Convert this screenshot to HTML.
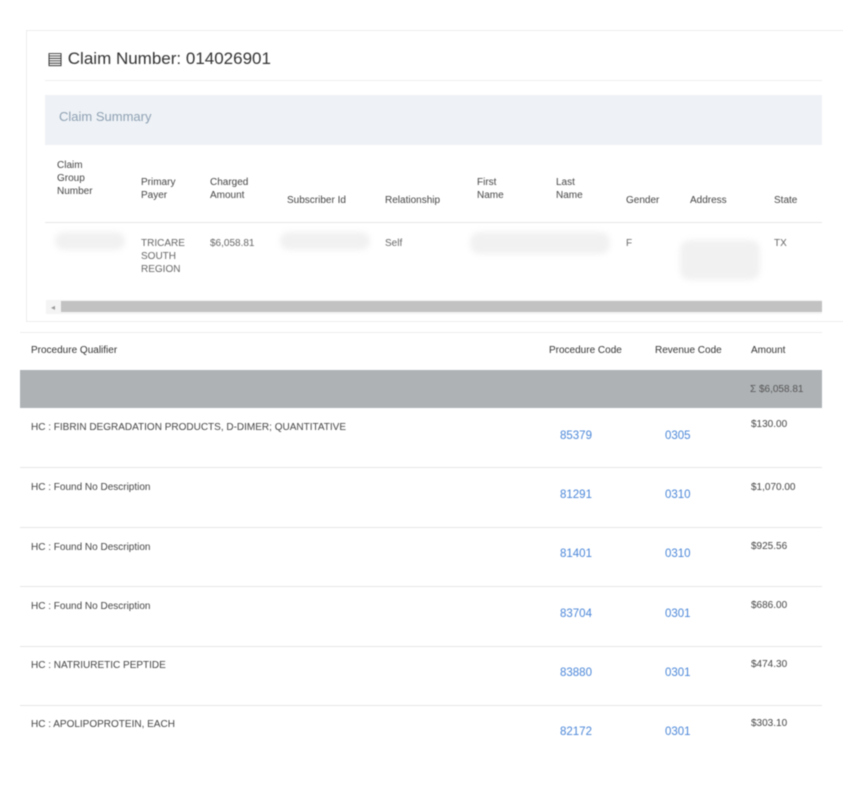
<!DOCTYPE html><html><head><style>
body{margin:0;width:843px;height:796px;background:#fff;position:relative;overflow:hidden;font-family:"Liberation Sans",sans-serif;color:#444;font-size:10px;filter:blur(0.4px)}
div{position:absolute}
.t{line-height:13px;white-space:nowrap}
.l{height:1px;background:#e6e6e6}
.b{color:#4a86d8;font-size:11.5px}
.blur{background:#f1f1f1;border-radius:10px;filter:blur(3px)}
</style></head><body>
<div style="left:26px;top:30px;width:820px;height:290px;border:1px solid #ececec;border-right:none"></div>
<div class="t" style="left:47px;top:49px;font-size:17px;line-height:20px;color:#333">&#9636; Claim Number: 014026901</div>
<div class="l" style="left:45px;top:80px;width:777px;background:#eee"></div>
<div style="left:45px;top:95px;width:777px;height:50px;background:#eef2f6"></div>
<div class="t" style="left:59px;top:110px;font-size:13px;color:#8ea0b3">Claim Summary</div>
<div class="t" style="left:57px;top:159px">Claim<br>Group<br>Number</div>
<div class="t" style="left:141px;top:176px">Primary<br>Payer</div>
<div class="t" style="left:210px;top:176px">Charged<br>Amount</div>
<div class="t" style="left:287px;top:194px">Subscriber Id</div>
<div class="t" style="left:385px;top:194px">Relationship</div>
<div class="t" style="left:477px;top:176px">First<br>Name</div>
<div class="t" style="left:556px;top:176px">Last<br>Name</div>
<div class="t" style="left:626px;top:194px">Gender</div>
<div class="t" style="left:690px;top:194px">Address</div>
<div class="t" style="left:774px;top:194px">State</div>
<div class="l" style="left:45px;top:222px;width:777px"></div>
<div class="blur" style="left:55px;top:232px;width:70px;height:18px"></div>
<div class="blur" style="left:280px;top:232px;width:90px;height:18px"></div>
<div class="blur" style="left:470px;top:232px;width:140px;height:22px"></div>
<div class="blur" style="left:680px;top:240px;width:80px;height:40px"></div>
<div class="t" style="left:141px;top:237px;color:#666">TRICARE<br>SOUTH<br>REGION</div>
<div class="t" style="left:210px;top:237px;color:#666">$6,058.81</div>
<div class="t" style="left:385px;top:237px;color:#666">Self</div>
<div class="t" style="left:626px;top:237px;color:#666">F</div>
<div class="t" style="left:774px;top:237px;color:#666">TX</div>
<div style="left:46px;top:300px;width:776px;height:14px;background:#f4f4f4"></div>
<div class="t" style="left:51px;top:301px;font-size:8px;color:#999">&#9666;</div>
<div style="left:61px;top:301px;width:761px;height:11px;background:#c2c2c2"></div>
<div class="l" style="left:20px;top:332px;width:802px;background:#ececec"></div>
<div class="t" style="left:31px;top:344px;color:#333">Procedure Qualifier</div>
<div class="t" style="left:549px;top:344px;color:#333">Procedure Code</div>
<div class="t" style="left:655px;top:344px;color:#333">Revenue Code</div>
<div class="t" style="left:751px;top:344px;color:#333">Amount</div>
<div style="left:20px;top:370px;width:802px;height:38px;background:#aeb2b5"></div>
<div class="t" style="left:750px;top:383px;color:#555">Σ $6,058.81</div>

<div class="t" style="left:31px;top:421px">HC : FIBRIN DEGRADATION PRODUCTS, D-DIMER; QUANTITATIVE</div>
<div class="t b" style="left:560px;top:430px">85379</div><div class="t b" style="left:665px;top:430px">0305</div>
<div class="t" style="left:751px;top:418px">$130.00</div>
<div class="l" style="left:20px;top:467px;width:802px"></div>

<div class="t" style="left:31px;top:481px">HC : Found No Description</div>
<div class="t b" style="left:560px;top:489px">81291</div><div class="t b" style="left:665px;top:489px">0310</div>
<div class="t" style="left:751px;top:481px">$1,070.00</div>
<div class="l" style="left:20px;top:527px;width:802px"></div>

<div class="t" style="left:31px;top:541px">HC : Found No Description</div>
<div class="t b" style="left:560px;top:548px">81401</div><div class="t b" style="left:665px;top:548px">0310</div>
<div class="t" style="left:751px;top:540px">$925.56</div>
<div class="l" style="left:20px;top:586px;width:802px"></div>

<div class="t" style="left:31px;top:600px">HC : Found No Description</div>
<div class="t b" style="left:560px;top:608px">83704</div><div class="t b" style="left:665px;top:608px">0301</div>
<div class="t" style="left:751px;top:599px">$686.00</div>
<div class="l" style="left:20px;top:646px;width:802px"></div>

<div class="t" style="left:31px;top:659px">HC : NATRIURETIC PEPTIDE</div>
<div class="t b" style="left:560px;top:667px">83880</div><div class="t b" style="left:665px;top:667px">0301</div>
<div class="t" style="left:751px;top:658px">$474.30</div>
<div class="l" style="left:20px;top:705px;width:802px"></div>

<div class="t" style="left:31px;top:718px">HC : APOLIPOPROTEIN, EACH</div>
<div class="t b" style="left:560px;top:726px">82172</div><div class="t b" style="left:665px;top:726px">0301</div>
<div class="t" style="left:751px;top:717px">$303.10</div>
</body></html>
